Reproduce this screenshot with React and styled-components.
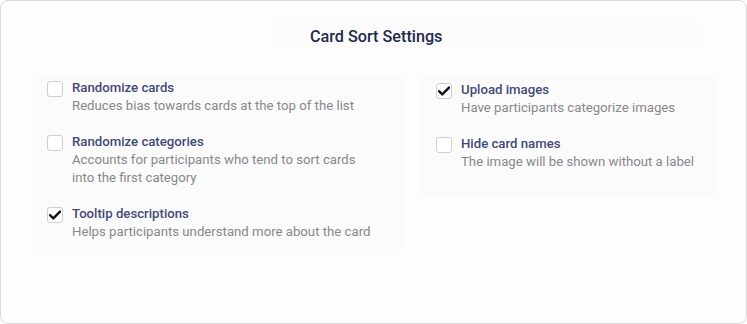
import React from 'react';
import styled, { createGlobalStyle } from 'styled-components';

const GlobalStyle = createGlobalStyle`
  body {
    margin: 0;
    background: #ffffff;
    font-family: Roboto, "Liberation Sans", sans-serif;
  }
`;

const Card = styled.div`
  box-sizing: border-box;
  width: 747px;
  height: 324px;
  border: 1px solid #dadada;
  border-radius: 8px;
  background: #fdfdfd;
  padding: 21px 29px 0 33px;
`;

const Header = styled.div`
  margin-left: 240px;
  margin-right: 20px;
  height: 26px;
  display: flex;
  align-items: center;
  padding: 3px 0 0 36px;
  box-sizing: border-box;
  background: #fbfbfc;
`;

const Title = styled.h2`
  margin: 0;
  font-size: 16.2px;
  font-weight: 500;
  color: #1f2b4e;
`;

const Columns = styled.div`
  display: grid;
  grid-template-columns: 370px 297px;
  column-gap: 16px;
  align-items: start;
  margin-top: 28px;
`;

const Panel = styled.div`
  display: flex;
  flex-direction: column;
  gap: 18px;
  padding: ${p => p.$top}px 13px ${p => p.$bottom}px ${p => p.$left}px;
  background: #fbfbfb;
`;

const Option = styled.label`
  display: flex;
  gap: 9px;
  align-items: flex-start;
`;

const Box = styled.span`
  flex: none;
  box-sizing: border-box;
  width: 16px;
  height: 16px;
  margin-top: 2px;
  border: 1px solid #cfcfcf;
  border-radius: 3px;
  background: #ffffff;
  display: flex;
  align-items: center;
  justify-content: center;
`;

const Text = styled.div`
  max-width: 300px;
  font-size: 13.2px;
  line-height: 18px;
`;

const Label = styled.div`
  font-weight: 500;
  color: #434a78;
`;

const Desc = styled.div`
  color: #88888c;
`;

function Check() {
  return (
    <svg width="12" height="10" viewBox="0 0 12 10">
      <path d="M1 5.2 L4.3 8.4 L11 1.6" fill="none" stroke="#111" strokeWidth="2.4" strokeLinecap="round" strokeLinejoin="round" />
    </svg>
  );
}

function Setting({ label, desc, checked }) {
  return (
    <Option>
      <Box>{checked && <Check />}</Box>
      <Text>
        <Label>{label}</Label>
        <Desc>{desc}</Desc>
      </Text>
    </Option>
  );
}

export default function App() {
  return (
    <>
      <GlobalStyle />
      <Card>
        <Header>
          <Title>Card Sort Settings</Title>
        </Header>
        <Columns>
          <Panel $top={3} $bottom={8} $left={13}>
            <Setting label="Randomize cards" desc="Reduces bias towards cards at the top of the list" />
            <Setting label="Randomize categories" desc="Accounts for participants who tend to sort cards into the first category" />
            <Setting label="Tooltip descriptions" desc="Helps participants understand more about the card" checked />
          </Panel>
          <Panel $top={5} $bottom={25} $left={16}>
            <Setting label="Upload images" desc="Have participants categorize images" checked />
            <Setting label="Hide card names" desc="The image will be shown without a label" />
          </Panel>
        </Columns>
      </Card>
    </>
  );
}
